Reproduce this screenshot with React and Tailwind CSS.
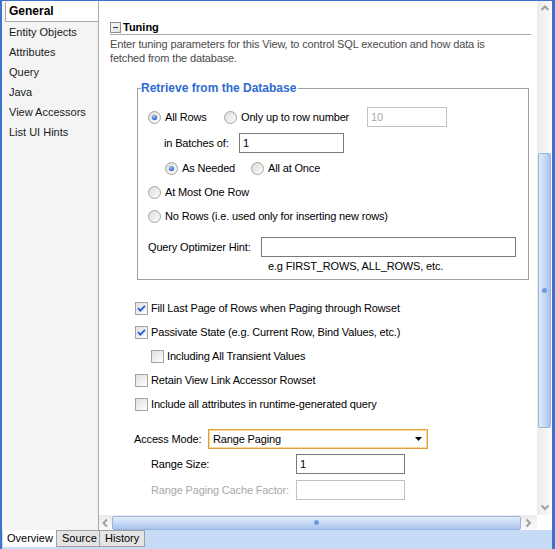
import React from "react";

const Radio = ({ checked }) => (
  <svg width="13" height="13" viewBox="0 0 13 13" className="shrink-0">
    <defs>
      <linearGradient id="radioFill" x1="0" y1="0" x2="1" y2="1">
        <stop offset="0" stopColor="#d9d9d4" />
        <stop offset="1" stopColor="#ffffff" />
      </linearGradient>
      <radialGradient id="radioDot" cx="0.4" cy="0.35" r="0.7">
        <stop offset="0" stopColor="#9cc4fb" />
        <stop offset="1" stopColor="#2457c4" />
      </radialGradient>
    </defs>
    <circle cx="6.5" cy="6.5" r="6" fill="url(#radioFill)" stroke="#a3a3a3" />
    {checked && <circle cx="6.5" cy="6.5" r="2.6" fill="url(#radioDot)" />}
  </svg>
);

const Check = ({ checked }) => (
  <svg width="13" height="13" viewBox="0 0 13 13" className="shrink-0">
    <defs>
      <linearGradient id="checkFill" x1="0" y1="0" x2="1" y2="1">
        <stop offset="0" stopColor="#dedede" />
        <stop offset="1" stopColor="#ffffff" />
      </linearGradient>
    </defs>
    <rect x="0.5" y="0.5" width="12" height="12" fill="url(#checkFill)" stroke="#a3a3a3" />
    {checked && (
      <path d="M3 6.2 L5.3 8.6 L10 3.8" fill="none" stroke="#2c5bd0" strokeWidth="1.9" />
    )}
  </svg>
);

const Chevron = ({ dir }) => {
  const d = {
    up: "M1.5 6 L5 2.5 L8.5 6",
    down: "M1.5 2.5 L5 6 L8.5 2.5",
    left: "M6 1.5 L2.5 5 L6 8.5",
    right: "M2.5 1.5 L6 5 L2.5 8.5",
  }[dir];
  return (
    <svg width="10" height="10" viewBox="0 0 10 10">
      <path d={d} fill="none" stroke="#a0a0a0" strokeWidth="2" />
    </svg>
  );
};

const RadioLabel = ({ checked, children, className = "" }) => (
  <div className={`flex items-center ${className}`}>
    <Radio checked={checked} />
    <span className="ml-[4px] whitespace-nowrap">{children}</span>
  </div>
);

const CheckRow = ({ checked, children, indent }) => (
  <div className={`h-[24px] flex items-center ${indent ? "ml-[52px]" : "ml-[36px]"}`}>
    <Check checked={checked} />
    <span className="ml-[3px] whitespace-nowrap">{children}</span>
  </div>
);

const navItems = ["Entity Objects", "Attributes", "Query", "Java", "View Accessors", "List UI Hints"];

export default function App() {
  return (
    <div className="w-[555px] h-[549px] overflow-hidden flex flex-col bg-[#c6dbf5] border-l-2 border-r-[3px] border-t border-[#3d72cf] font-['Liberation_Sans',Arial,sans-serif] text-[11px] text-black">
      <div className="h-[529px] flex">
        {/* left navigation */}
        <div className="w-[97px] h-full bg-[#f4f4f4] border-r border-[#a9a9a9] pl-[3px]">
          <div className="h-[21px] bg-white border-l border-b border-[#a9a9a9] rounded-tl-[3px] pl-[3px] flex items-center font-bold text-[12px]">
            General
          </div>
          <div className="pl-[4px]">
            {navItems.map((item) => (
              <div key={item} className="h-[20px] flex items-center text-[#1a1a1a] whitespace-nowrap">
                {item}
              </div>
            ))}
          </div>
        </div>

        <div className="w-[453px] h-full flex flex-col">
          <div className="h-[514px] flex">
            {/* editor content */}
            <div className="w-[438px] h-full bg-white overflow-hidden pt-[19px] tracking-[-0.15px]">
              <div className="ml-[11px] w-[421px] h-[15px] border-b border-[#a8a8b0] flex items-center">
                <svg width="11" height="11" viewBox="0 0 11 11" className="shrink-0">
                  <defs>
                    <linearGradient id="minusFill" x1="0" y1="0" x2="1" y2="1">
                      <stop offset="0" stopColor="#ffffff" />
                      <stop offset="1" stopColor="#dcdcdc" />
                    </linearGradient>
                  </defs>
                  <rect x="0.5" y="0.5" width="10" height="10" fill="url(#minusFill)" stroke="#8c8c8c" />
                  <path d="M3 5.5 H8" stroke="#333" strokeWidth="1" />
                </svg>
                <span className="ml-[2px] font-bold tracking-normal">Tuning</span>
              </div>
              <div className="ml-[11px] mt-[2px] leading-[14px] text-[#4b4b4b] whitespace-nowrap">
                Enter tuning parameters for this View, to control SQL execution and how data is
                <br />
                fetched from the database.
              </div>

              <fieldset className="ml-[38px] mt-[15px] w-[392px] border border-[#a0a0a0] pb-[5px]">
                <legend className="ml-[3px] pr-[2px] leading-[16px] text-[12px] font-bold text-[#2f6bd1] tracking-normal">
                  Retrieve from the Database
                </legend>
                <div className="mt-[11px] h-[20px] pl-[10px] flex items-center">
                  <RadioLabel checked className="w-[76px]">All Rows</RadioLabel>
                  <RadioLabel className="w-[143px]">Only up to row number</RadioLabel>
                  <div className="w-[80px] h-[20px] border border-[#c2c2c2] pl-[3px] flex items-center text-[#a8a8a8]">
                    10
                  </div>
                </div>
                <div className="mt-[6px] h-[20px] pl-[26px] flex items-center">
                  <span className="w-[75px] whitespace-nowrap">in Batches of:</span>
                  <div className="w-[105px] h-[20px] border border-[#7a7a7a] pl-[3px] flex items-center">1</div>
                </div>
                <div className="mt-[5px] h-[20px] pl-[27px] flex items-center">
                  <RadioLabel checked className="w-[86px]">As Needed</RadioLabel>
                  <RadioLabel>All at Once</RadioLabel>
                </div>
                <div className="mt-[4px] h-[20px] pl-[10px] flex items-center">
                  <RadioLabel>At Most One Row</RadioLabel>
                </div>
                <div className="mt-[4px] h-[20px] pl-[10px] flex items-center">
                  <RadioLabel>No Rows (i.e. used only for inserting new rows)</RadioLabel>
                </div>
                <div className="mt-[11px] h-[20px] pl-[10px] flex items-center">
                  <span className="w-[113px] whitespace-nowrap">Query Optimizer Hint:</span>
                  <div className="w-[255px] h-[20px] border border-[#7a7a7a]" />
                </div>
                <div className="mt-[1px] h-[16px] pl-[130px] flex items-center whitespace-nowrap">
                  e.g FIRST_ROWS, ALL_ROWS, etc.
                </div>
              </fieldset>

              <div className="mt-[16px]">
                <CheckRow checked>Fill Last Page of Rows when Paging through Rowset</CheckRow>
                <CheckRow checked>Passivate State (e.g. Current Row, Bind Values, etc.)</CheckRow>
                <CheckRow indent>Including All Transient Values</CheckRow>
                <CheckRow>Retain View Link Accessor Rowset</CheckRow>
                <CheckRow>Include all attributes in runtime-generated query</CheckRow>
              </div>

              <div className="mt-[13px] h-[20px] ml-[35px] flex items-center">
                <span className="w-[74px] whitespace-nowrap">Access Mode:</span>
                <div className="w-[220px] h-[20px] border border-[#e0a03c] shadow-[inset_0_0_0_1px_#fbd99a] pl-[4px] pr-[5px] flex items-center justify-between">
                  <span>Range Paging</span>
                  <svg width="7" height="4" viewBox="0 0 7 4">
                    <path d="M0 0 H7 L3.5 4 Z" fill="#000" />
                  </svg>
                </div>
              </div>
              <div className="mt-[5px] h-[20px] ml-[52px] flex items-center">
                <span className="w-[145px] whitespace-nowrap">Range Size:</span>
                <div className="w-[109px] h-[20px] border border-[#7a7a7a] pl-[3px] flex items-center">1</div>
              </div>
              <div className="mt-[6px] h-[20px] ml-[52px] flex items-center">
                <span className="w-[145px] whitespace-nowrap text-[#a8a8a8]">Range Paging Cache Factor:</span>
                <div className="w-[109px] h-[20px] border border-[#c2c2c2]" />
              </div>
            </div>

            {/* vertical scrollbar */}
            <div className="w-[15px] h-full flex flex-col bg-gradient-to-r from-[#ebebeb] to-[#fbfbfb]">
              <div className="h-[15px] flex items-center justify-center">
                <Chevron dir="up" />
              </div>
              <div className="flex-1">
                <div className="mt-[137px] h-[275px] mx-[1px] border border-[#98b4e0] rounded-[2px] bg-gradient-to-r from-[#e3ecfa] via-[#c5d8f4] to-[#a9c3ec] flex items-center justify-center">
                  <div className="w-[5px] h-[5px] rounded-full bg-[#6d9ce6]" />
                </div>
              </div>
              <div className="h-[15px] flex items-center justify-center">
                <Chevron dir="down" />
              </div>
            </div>
          </div>

          {/* horizontal scrollbar */}
          <div className="h-[15px] flex">
            <div className="w-[438px] h-full flex items-center bg-gradient-to-b from-[#ebebeb] to-[#fbfbfb]">
              <div className="w-[13px] flex justify-center">
                <Chevron dir="left" />
              </div>
              <div className="w-[409px] h-[14px] border border-[#98b4e0] rounded-[2px] bg-gradient-to-b from-[#e3ecfa] via-[#c5d8f4] to-[#a9c3ec] flex items-center justify-center">
                <div className="w-[5px] h-[5px] rounded-full bg-[#6d9ce6]" />
              </div>
              <div className="flex-1 flex justify-center">
                <Chevron dir="right" />
              </div>
            </div>
            <div className="w-[15px] h-full bg-white" />
          </div>
        </div>
      </div>

      {/* bottom tabs */}
      <div className="h-[19px] flex items-start">
        <div className="ml-[1px] w-[54px] h-[17px] bg-white border-r border-[#a0a0a0] pl-[4px] flex items-center">
          Overview
        </div>
        <div className="w-[43px] h-[17px] bg-[#e4e4e4] border-r border-b border-t border-[#a0a0a0] pl-[5px] flex items-center">
          Source
        </div>
        <div className="w-[45px] h-[17px] bg-[#e4e4e4] border-r border-b border-t border-[#a0a0a0] pl-[5px] flex items-center">
          History
        </div>
      </div>
    </div>
  );
}
